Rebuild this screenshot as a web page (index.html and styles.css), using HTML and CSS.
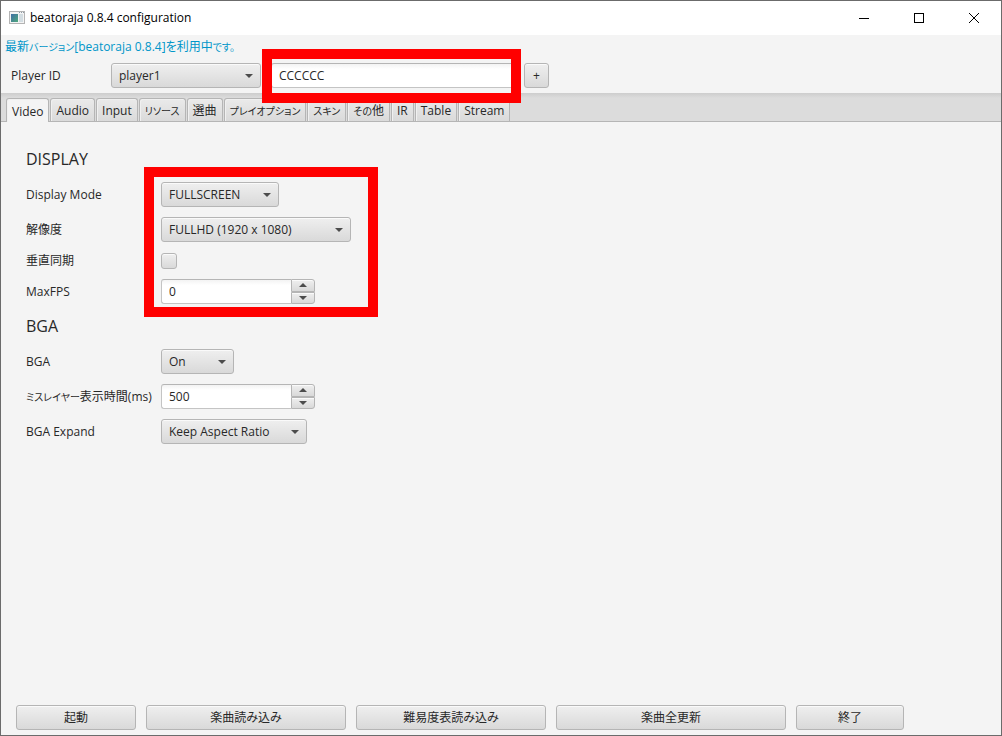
FILE: index.html
```html
<!DOCTYPE html>
<html lang="ja">
<head>
    <meta charset="UTF-8">
    <meta name="viewport" content="width=device-width, initial-scale=1.0">
    <title>beatoraja 0.8.4 configuration</title>
    <link rel="stylesheet" href="styles.css">
</head>
<body>
    <div class="window">
        <header class="title-bar">
            <svg class="app-icon" width="16" height="14" viewBox="0 0 16 14">
                <defs>
                    <linearGradient id="screen" x1="0" y1="0" x2="1" y2="1">
                        <stop offset="0" stop-color="#3f6fa5"/>
                        <stop offset="1" stop-color="#4fa87c"/>
                    </linearGradient>
                </defs>
                <rect x="0.5" y="0.5" width="15" height="12" fill="#f4f4f4" stroke="#b4b4b4"/>
                <rect x="2" y="3" width="7" height="8" fill="url(#screen)"/>
                <rect x="10" y="3" width="4" height="8" fill="#d3dde2"/>
                <path d="M10 1.5h1M12 1.5h1M14 1.5h1" stroke="#8d9aa5"/>
            </svg>
            <h1 class="window-title">beatoraja 0.8.4 configuration</h1>
            <div class="window-buttons">
                <button class="window-button" aria-label="最小化">
                    <svg width="10" height="10" viewBox="0 0 10 10"><path d="M0 5.5h10" stroke="#000"/></svg>
                </button>
                <button class="window-button" aria-label="最大化">
                    <svg width="10" height="10" viewBox="0 0 10 10"><rect x="0.5" y="0.5" width="9" height="9" fill="none" stroke="#000"/></svg>
                </button>
                <button class="window-button" aria-label="閉じる">
                    <svg width="10" height="10" viewBox="0 0 10 10"><path d="M0 0l10 10M10 0L0 10" stroke="#000"/></svg>
                </button>
            </div>
        </header>

        <div class="version"><a href="#">最新<span class="kana">バージョン</span>[beatoraja 0.8.4]を利用中<span class="kana">です。</span></a></div>

        <div class="player-row">
            <label class="player-label" for="player-id">Player ID</label>
            <span class="combo combo-player">
                <select id="player-id"><option>player1</option></select>
            </span>
            <div class="player-name">
                <input class="text-field" type="text" value="CCCCCC" aria-label="Player Name">
                <div class="marker marker-name"></div>
            </div>
            <button class="button button-add">+</button>
        </div>

        <nav class="tabs" role="tablist">
            <button class="tab active" role="tab" aria-selected="true">Video</button>
            <button class="tab" role="tab">Audio</button>
            <button class="tab" role="tab">Input</button>
            <button class="tab" role="tab"><span class="kana">リソース</span></button>
            <button class="tab" role="tab">選曲</button>
            <button class="tab" role="tab"><span class="kana">プレイオプション</span></button>
            <button class="tab" role="tab"><span class="kana">スキン</span></button>
            <button class="tab" role="tab"><span class="kana">その</span>他</button>
            <button class="tab" role="tab">IR</button>
            <button class="tab" role="tab">Table</button>
            <button class="tab" role="tab">Stream</button>
        </nav>

        <main class="content">
            <h2 class="section-title">DISPLAY</h2>
            <div class="form-group">
                <div class="form-row">
                    <label for="display-mode">Display Mode</label>
                    <span class="combo combo-mode">
                        <select id="display-mode"><option>FULLSCREEN</option></select>
                    </span>
                </div>
                <div class="form-row">
                    <label for="resolution">解像度</label>
                    <span class="combo combo-resolution">
                        <select id="resolution"><option>FULLHD (1920 x 1080)</option></select>
                    </span>
                </div>
                <div class="form-row form-row-check">
                    <label for="vsync">垂直同期</label>
                    <input class="check" type="checkbox" id="vsync">
                </div>
                <div class="form-row">
                    <label for="max-fps">MaxFPS</label>
                    <div class="spinner">
                        <input class="text-field" type="number" id="max-fps" value="0">
                        <div class="spinner-buttons">
                            <button class="spin up" aria-label="増やす"></button>
                            <button class="spin down" aria-label="減らす"></button>
                        </div>
                    </div>
                </div>
                <div class="marker marker-display"></div>
            </div>

            <h2 class="section-title">BGA</h2>
            <div class="form-group">
                <div class="form-row">
                    <label for="bga">BGA</label>
                    <span class="combo combo-bga">
                        <select id="bga"><option>On</option></select>
                    </span>
                </div>
                <div class="form-row">
                    <label for="miss-layer"><span class="kana">ミスレイヤー</span>表示時間(ms)</label>
                    <div class="spinner">
                        <input class="text-field" type="number" id="miss-layer" value="500">
                        <div class="spinner-buttons">
                            <button class="spin up" aria-label="増やす"></button>
                            <button class="spin down" aria-label="減らす"></button>
                        </div>
                    </div>
                </div>
                <div class="form-row">
                    <label for="bga-expand">BGA Expand</label>
                    <span class="combo combo-expand">
                        <select id="bga-expand"><option>Keep Aspect Ratio</option></select>
                    </span>
                </div>
            </div>
        </main>

        <footer class="actions">
            <button class="button button-start">起動</button>
            <button class="button button-load">楽曲読み込み</button>
            <button class="button button-table">難易度表読み込み</button>
            <button class="button button-update">楽曲全更新</button>
            <button class="button button-exit">終了</button>
        </footer>
    </div>
</body>
</html>
```

FILE: styles.css
```css
* {
    box-sizing: border-box;
}

body {
    margin: 0;
    font-family: "Open Sans", "Noto Sans CJK JP", sans-serif;
    font-size: 12px;
    line-height: 16px;
    color: #282828;
    font-feature-settings: "palt";
}

button,
input,
select {
    font: inherit;
    font-feature-settings: inherit;
    color: inherit;
    margin: 0;
}

.kana {
    font-size: 10px;
}

.window {
    display: flex;
    flex-direction: column;
    min-height: 100vh;
    background-color: #f4f4f4;
    border: 1px solid #6b6b6b;
}

/* Title bar */
.title-bar {
    display: flex;
    align-items: center;
    height: 34px;
    padding-left: 8px;
    background-color: #fff;
}

.window-title {
    margin: 0 0 0 5px;
    font-size: 12px;
    font-weight: normal;
    color: #000;
}

.window-buttons {
    display: flex;
    margin-left: auto;
}

.window-button {
    display: flex;
    align-items: center;
    justify-content: center;
    width: 55px;
    height: 34px;
    padding: 0;
    border: none;
    background: none;
}

.version {
    height: 24px;
    padding: 4px;
}

.version a {
    color: #0096c9;
    text-decoration: none;
}

/* Shared controls */
.button,
.combo select,
.check,
.spin {
    border: 1px solid #b5b5b5;
    border-radius: 3px;
    background: linear-gradient(#efefef, #d9d9d9);
    box-shadow: inset 0 1px #fafafa;
}

.button {
    height: 25px;
    padding: 0;
}

.combo {
    position: relative;
    display: block;
}

.combo select {
    display: block;
    width: 100%;
    height: 25px;
    padding: 0 24px 0 7px;
    appearance: none;
}

.combo::after,
.spin::after {
    content: "";
    border: 4px solid transparent;
    border-top-color: #4c4c4c;
    border-bottom-width: 0;
}

.combo::after {
    position: absolute;
    top: 11px;
    right: 8px;
    pointer-events: none;
}

.text-field {
    display: block;
    width: 100%;
    height: 25px;
    padding: 0 7px;
    border: 1px solid #c4c4c4;
    border-top-color: #b5b5b5;
    border-radius: 3px;
    background: linear-gradient(#f3f3f3, #fff 5px);
    appearance: textfield;
}

.text-field::-webkit-inner-spin-button {
    appearance: none;
}

.check {
    width: 16px;
    height: 16px;
    appearance: none;
}

.spinner {
    display: flex;
    width: 154px;
}

.spinner .text-field {
    flex: 1;
    min-width: 0;
    border-right: none;
    border-radius: 3px 0 0 3px;
}

.spinner-buttons {
    display: flex;
    flex-direction: column;
    width: 24px;
}

.spin {
    display: flex;
    flex: 1;
    align-items: center;
    justify-content: center;
    padding: 0;
}

.spin.up {
    border-radius: 0 3px 0 0;
}

.spin.down {
    border-radius: 0 0 3px 0;
}

.spin.up::after {
    border-width: 0 4px 4px;
    border-color: transparent transparent #4c4c4c;
}

/* Player */
.player-row {
    display: flex;
    align-items: center;
    padding: 4px 10px 5px;
}

.player-label {
    width: 100px;
}

.combo-player {
    width: 150px;
}

.player-name {
    position: relative;
    width: 243px;
    margin: 0 10px;
}

.button-add {
    width: 25px;
}

/* Tabs */
.tabs {
    display: flex;
    gap: 1px;
    padding: 5px 5px 0;
    background: linear-gradient(#cdcdcd, #dcdcdc 5px);
    border-bottom: 1px solid #b5b5b5;
}

.tab {
    height: 23px;
    padding: 2px 5px 0;
    border: 1px solid #b5b5b5;
    border-bottom: none;
    border-radius: 3px 3px 0 0;
    background: linear-gradient(#eaeaea, #dadada);
    box-shadow: inset 1px 1px #f0f0f0;
    white-space: nowrap;
}

.tab.active {
    height: 24px;
    margin-bottom: -1px;
    background: #f4f4f4;
}

/* Settings */
.content {
    display: flex;
    flex: 1;
    flex-direction: column;
    gap: 10px;
    padding: 25px;
}

.section-title {
    margin: 0;
    font-size: 16px;
    font-weight: normal;
    line-height: 25px;
}

.form-group {
    position: relative;
    display: flex;
    flex-direction: column;
    gap: 10px;
}

.form-row {
    display: flex;
    align-items: center;
    min-height: 25px;
}

.form-row-check {
    min-height: 17px;
}

.form-row label {
    width: 135px;
    white-space: nowrap;
}

.combo-mode {
    width: 118px;
}

.combo-resolution {
    width: 190px;
}

.combo-bga {
    width: 73px;
}

.combo-expand {
    width: 146px;
}

/* Red frames over the settings to change */
.marker {
    position: absolute;
    z-index: 1;
    border: 10px solid #f00;
    pointer-events: none;
}

.marker-name {
    top: -14px;
    left: -9px;
    width: 259px;
    height: 54px;
}

.marker-display {
    top: -15px;
    left: 118px;
    width: 234px;
    height: 150px;
}

/* Bottom buttons */
.actions {
    display: flex;
    gap: 10px;
    padding: 5px 15px;
}

.button-start {
    width: 120px;
}

.button-load {
    width: 200px;
}

.button-table {
    width: 190px;
}

.button-update {
    width: 230px;
}

.button-exit {
    width: 108px;
}
```
